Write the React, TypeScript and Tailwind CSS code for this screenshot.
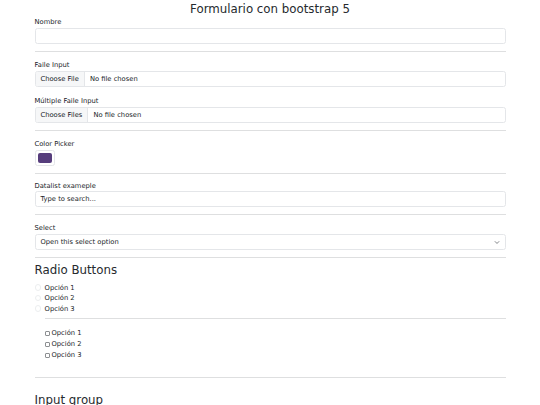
import React from "react";

const label = "block text-[6.75px] leading-[9px] text-[#212529] mb-[1.5px]";
const control =
  "h-[16px] w-full rounded-[2.5px] border border-[#e4e6e9] bg-white flex items-center text-[6.75px] leading-[10px] text-[#212529]";

function Hr({ className = "" }: { className?: string }) {
  return <div className={"h-px bg-[#dedfe0] " + className} />;
}

function FileInput({ btn }: { btn: string }) {
  return (
    <div className={control + " overflow-hidden"}>
      <div className="h-full flex items-center px-[5px] bg-[#f6f7f8] border-r border-[#e4e6e9]">
        {btn}
      </div>
      <span className="ml-[5px]">No file chosen</span>
    </div>
  );
}

function Row({ t, kind }: { t: string; kind: "radio" | "check" }) {
  return (
    <div className="flex items-center h-[10px] text-[6.75px] leading-[10px] text-[#212529]">
      {kind === "radio" ? (
        <span className="w-[6.5px] h-[6.5px] rounded-full border border-[#eceeef] bg-white" />
      ) : (
        <span className="w-[5px] h-[5px] rounded-[1px] border border-[#8d8f92] bg-white" />
      )}
      <span className={kind === "radio" ? "ml-[3.6px]" : "ml-[2px]"}>{t}</span>
    </div>
  );
}

export default function App() {
  return (
    <div className="w-[540px] min-h-[405px] bg-white font-['DejaVu_Sans',sans-serif] text-[#212529] overflow-hidden">
      <div className="w-[471px] mx-auto">
        <h3 className="text-center text-[11.8px] leading-[14.2px] pt-[2px] font-normal text-[#262a2e]">
          Formulario con bootstrap 5
        </h3>

        <div className="mt-[1.5px]">
          <label className={label}>Nombre</label>
          <div className={control} />
        </div>

        <Hr className="mt-[6.75px] mb-[8.75px]" />

        <div>
          <label className={label}>Faile Input</label>
          <FileInput btn="Choose File" />
        </div>
        <div className="mt-[9.5px]">
          <label className={label}>Múltiple Faile Input</label>
          <FileInput btn="Choose Files" />
        </div>

        <Hr className="mt-[6.75px] mb-[8.75px]" />

        <div>
          <label className={label}>Color Picker</label>
          <div className="h-[16px] w-[20px] rounded-[2.5px] border border-[#e4e6e9] p-[2px] flex">
            <div className="flex-1 rounded-[2px] bg-[#563d7c]" />
          </div>
        </div>

        <Hr className="mt-[6.5px] mb-[8.5px]" />

        <div>
          <label className="block text-[6.75px] leading-[9px] text-[#212529] mb-0">Datalist exameple</label>
          <div className={control + " px-[5px] text-[#6c757d]"}>Type to search...</div>
        </div>

        <Hr className="mt-[6.75px] mb-[8.75px]" />

        <div>
          <label className={label}>Select</label>
          <div className={control + " px-[5px] justify-between"}>
            <span>Open this select option</span>
            <svg width="6" height="5" viewBox="0 0 16 16">
              <path d="M2 5l6 6 6-6" fill="none" stroke="#343a40" strokeWidth="2" strokeLinecap="round" strokeLinejoin="round" />
            </svg>
          </div>
        </div>

        <Hr className="mt-[6.75px] mb-[5px]" />

        <h3 className="text-[11.8px] leading-[14.2px] font-normal text-[#262a2e] mb-[5.4px]">Radio Buttons</h3>
        <div className="flex flex-col gap-[0.6px]">
          {["Opción 1", "Opción 2", "Opción 3"].map((t) => (
            <Row key={t} t={t} kind="radio" />
          ))}
        </div>

        <div className="pl-[10px]">
          <Hr className="mt-[4px] mb-[9.7px]" />
          <div className="flex flex-col gap-[1px]">
            {["Opción 1", "Opción 2", "Opción 3"].map((t) => (
              <Row key={t} t={t} kind="check" />
            ))}
          </div>
        </div>

        <Hr className="mt-[17px] mb-[15px]" />

        <h3 className="text-[11.8px] leading-[14.2px] font-normal text-[#262a2e]">Input group</h3>
      </div>
    </div>
  );
}
